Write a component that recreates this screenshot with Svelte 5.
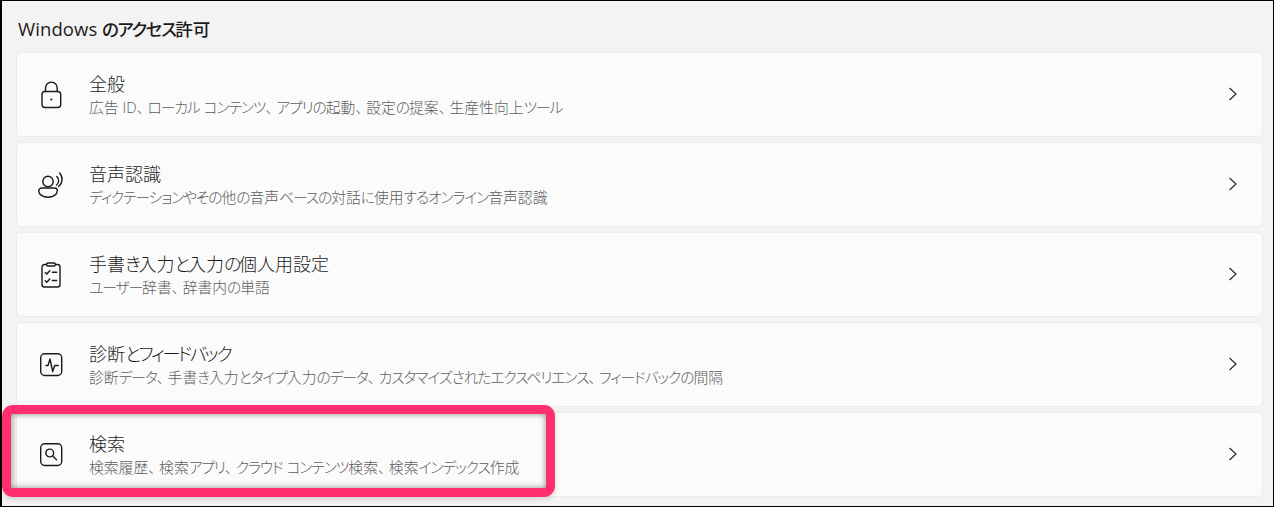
<script>
  const rows = [
    { title: '全般', sub: '広告 ID、ローカル コンテンツ、アプリの起動、設定の提案、生産性向上ツール', icon: 'lock' },
    { title: '音声認識', sub: 'ディクテーションやその他の音声ベースの対話に使用するオンライン音声認識', icon: 'voice' },
    { title: '手書き入力と入力の個人用設定', sub: 'ユーザー辞書、辞書内の単語', icon: 'clip' },
    { title: '診断とフィードバック', sub: '診断データ、手書き入力とタイプ入力のデータ、カスタマイズされたエクスペリエンス、フィードバックの間隔', icon: 'pulse' },
    { title: '検索', sub: '検索履歴、検索アプリ、クラウド コンテンツ検索、検索インデックス作成', icon: 'search' }
  ];

  // kana runs are set tighter than kanji, the way the UI font does it
  const split = (s) => s.match(/[ぁ-んァ-ヶー]+|、|[^ぁ-んァ-ヶー、]+/g);
  const kind = (p) => (p === '、' ? 'comma' : /^[ぁ-んァ-ヶー]/.test(p) ? 'kana' : '');
</script>

<div class="frame">
  <h2><span class="latin">Windows</span> <span class="kana">のアクセス</span>許可</h2>
  <div class="list">
    {#each rows as row}
      <div class="card">
        <svg class="icon" viewBox="0 0 24 24" fill="none" stroke="#1a1a1a" stroke-width="1.400" stroke-linecap="round" stroke-linejoin="round">
          {#if row.icon === 'lock'}
            <rect x="2" y="8.500" width="18.700" height="16" rx="3" />
            <path d="M5.500 8.500V5a5.850 5.850 0 0 1 11.700 0V8.500" />
            <circle cx="11.350" cy="16.500" r="1.100" fill="#1a1a1a" stroke="none" />
          {:else if row.icon === 'voice'}
            <circle cx="8" cy="8.500" r="5.200" />
            <path d="M2 15h12.500c1.600 0 2.800 1.200 2.800 2.700 0 3.800-4.200 6.500-9.300 6.500S-1.300 21.500-1.300 17.700C-1.300 16.200.4 15 2 15z" />
            <path d="M16.800 3.500a5.500 5.500 0 0 1 -0.300 8.500" />
            <path d="M19.500 0a9 9 0 0 1 -1 13.500" />
          {:else if row.icon === 'clip'}
            <rect x="2" y="1.500" width="18" height="22.500" rx="2.500" />
            <rect x="6.700" y="0" width="8.600" height="3" rx="1.200" fill="#fbfbfb" />
            <path d="M5.300 9.500l1.500 1.500 3-3.200M12.300 9.200h4.400M5.300 17.800l1.500 1.500 3-3.200M12.300 17.500h4.400" />
          {:else if row.icon === 'pulse'}
            <rect x="0.700" y="0.800" width="21" height="21.700" rx="4" />
            <path d="M6 12.500h2l2-6.500 2.700 12.500 2-6h3.500" />
          {:else}
            <rect x="0.700" y="0.800" width="21" height="21.700" rx="4" />
            <circle cx="9.700" cy="10" r="3.900" />
            <path d="M12.600 12.800l3.900 3.900" />
          {/if}
        </svg>
        <div class="text">
          <div class="title">{#each split(row.title) as part}<span class={kind(part)}>{part}</span>{/each}</div>
          <div class="sub">{#each split(row.sub) as part}<span class={kind(part)}>{part}</span>{/each}</div>
        </div>
        <svg class="chev" viewBox="0 0 10 14" fill="none" stroke="#2b2b2b" stroke-width="1.200">
          <path d="M1.500 1l6.500 6-6.500 6" />
        </svg>
      </div>
    {/each}
  </div>
  <div class="mark"></div>
</div>

<style>
  :global(body) {
    margin: 0;
    background: #fff;
  }

  .frame {
    position: relative;
    box-sizing: border-box;
    width: 1274px;
    height: 507px;
    border: 1px solid #000;
    border-left-width: 2px;
    background: #f3f3f3;
    padding: 17px 10px 0 14px;
    font-family: "Open Sans", "Noto Sans CJK JP", sans-serif;
    font-feature-settings: "palt";
    color: #1b1b1b;
  }

  h2 {
    margin: 0 0 12px 2px;
    font-size: 17.500px;
    line-height: 22px;
    font-weight: 500;
  }

  h2 .latin {
    font-size: 18.500px;
    letter-spacing: 0.1px;
  }

  h2 .kana {
    letter-spacing: -1.400px;
  }

  .list {
    display: flex;
    flex-direction: column;
    gap: 5px;
  }

  .card {
    box-sizing: border-box;
    height: 85px;
    display: flex;
    align-items: center;
    background: #fbfbfb;
    border: 1px solid #ececec;
    border-radius: 5px;
    padding: 0 24px 0 23px;
  }

  .icon {
    width: 24px;
    height: 24px;
    flex: none;
    overflow: visible;
  }

  .text {
    flex: 1;
    margin-left: 25px;
    padding-top: 1px;
  }

  .title {
    font-size: 18px;
    line-height: 22px;
    font-weight: 300;
  }

  .title .kana {
    letter-spacing: -2.300px;
  }

  .sub {
    font-size: 14.800px;
    line-height: 20px;
    margin-top: 2px;
    font-weight: 300;
    color: #5e5e5e;
  }

  .sub .kana {
    letter-spacing: -1.100px;
  }

  .sub .comma {
    margin-right: 3.500px;
  }

  .chev {
    width: 10px;
    height: 14px;
    flex: none;
    margin-bottom: 1px;
  }

  .mark {
    position: absolute;
    left: 0;
    top: 404px;
    width: 553px;
    height: 92px;
    box-sizing: border-box;
    border: 9px solid #ff2e6e;
    border-radius: 11px;
    box-shadow: inset 0 0 6px rgba(0, 0, 0, 0.45), 0 2px 5px rgba(0, 0, 0, 0.15);
  }
</style>
